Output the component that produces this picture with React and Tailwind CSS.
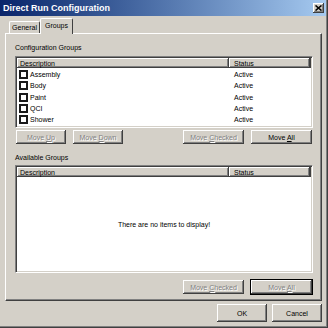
const raised = "bg-[#d4d0c8] shadow-[inset_-1px_-1px_#404040,inset_1px_1px_#ffffff,inset_-2px_-2px_#808080]";
const disabledText = "text-[#808080] [text-shadow:1px_1px_0_#ffffff]";

function Btn({ children, w, disabled, outline }) {
  return (
    <div
      className={`h-[14px] ${w} flex items-center justify-center ${raised} ${disabled ? disabledText : "text-black"} ${outline ? "outline outline-1 outline-black" : ""}`}
    >
      <span className="whitespace-nowrap">{children}</span>
    </div>
  );
}

function Header() {
  return (
    <div className="h-[10px] flex shrink-0">
      <div className={`w-[212px] h-full pl-[3px] flex items-center ${raised}`}>Description</div>
      <div className={`w-[81px] h-full pl-[5px] flex items-center ${raised}`}>Status</div>
      <div className={`flex-1 h-full ${raised}`}></div>
    </div>
  );
}

function ListBox({ h, children }) {
  return (
    <div
      className={`w-[298px] ${h} bg-white border-t border-l border-[#808080] border-r border-b border-r-white border-b-white shadow-[inset_1px_1px_#404040,inset_-1px_-1px_#d4d0c8] p-px flex flex-col`}
    >
      {children}
    </div>
  );
}

const rows = ["Assembly", "Body", "Paint", "QCI", "Shower"];

export default function App() {
  return (
    <div className="w-[328px] h-[328px] bg-[#d4d0c8] border-r border-b border-[#404040] font-['Liberation_Sans',Arial,sans-serif] text-[7px] leading-[9px] text-black overflow-hidden">
      <div className="h-full border-r border-b border-[#808080] flex flex-col">
        {/* Title bar */}
        <div className="h-[16px] shrink-0 bg-linear-to-r from-[#0a246a] to-[#a6caf0] flex items-center justify-between pl-[3px] pr-[2px]">
          <span className="text-white font-bold text-[9px] leading-[11px] whitespace-nowrap">Direct Run Configuration</span>
          <div className={`w-[11px] h-[10px] flex items-center justify-center ${raised}`}>
            <svg width="7" height="6" viewBox="0 0 7 6">
              <path d="M0.5 0.5 L6.5 5.5 M6.5 0.5 L0.5 5.5" stroke="#000" strokeWidth="1.6" />
            </svg>
          </div>
        </div>

        {/* Body */}
        <div className="flex-1 flex flex-col pl-[5px]">
          {/* Tabs */}
          <div className="h-[17px] shrink-0 flex items-end pl-[4px] relative z-10">
            <div className="w-[31px] h-[12px] border-t border-l border-white border-r border-r-[#404040] rounded-t-[2px] flex items-center justify-center pb-px">
              General
            </div>
            <div className="w-[33px] h-[16px] -mb-px bg-[#d4d0c8] border-t border-l border-white border-r border-r-[#404040] rounded-t-[2px] flex justify-center pt-[2px]">
              Groups
            </div>
          </div>

          {/* Panel */}
          <div className="w-[317px] h-[268px] shrink-0 border-t border-l border-white border-r border-b border-r-[#404040] border-b-[#404040] shadow-[inset_-1px_-1px_#808080] flex flex-col pl-[9px]">
            <div className="h-[9px] mt-[9px] whitespace-nowrap">Configuration Groups</div>
            <div className="mt-[4px]">
              <ListBox h="h-[72px]">
                <Header />
                <div className="pt-px flex flex-col">
                  {rows.map((r) => (
                    <div key={r} className="h-[11.25px] flex items-center">
                      <div className="w-[212px] flex items-center pl-[2px]">
                        <div className="w-[9px] h-[9px] border-2 border-[#1a1a1a] bg-white shrink-0"></div>
                        <span className="ml-[2px]">{r}</span>
                      </div>
                      <div className="pl-[5px]">Active</div>
                    </div>
                  ))}
                </div>
              </ListBox>
            </div>
            <div className="mt-[2px] w-[298px] flex">
              <div className="ml-px flex gap-[7px]">
                <Btn w="w-[50px]" disabled>Move <u>U</u>p</Btn>
                <Btn w="w-[50px]" disabled>Move <u>D</u>own</Btn>
              </div>
              <div className="ml-auto mr-px flex gap-[7px]">
                <Btn w="w-[61px]" disabled>Move <u>C</u>hecked</Btn>
                <Btn w="w-[61px]">Move <u>A</u>ll</Btn>
              </div>
            </div>

            <div className="h-[9px] mt-[9px] whitespace-nowrap">Available Groups</div>
            <div className="mt-[3px]">
              <ListBox h="h-[108px]">
                <Header />
                <div className="flex-1 flex items-center justify-center">There are no items to display!</div>
              </ListBox>
            </div>
            <div className="mt-[7px] w-[298px] flex">
              <div className="ml-auto mr-px flex gap-[7px]">
                <Btn w="w-[61px]" disabled>Move <u>C</u>hecked</Btn>
                <Btn w="w-[61px]" disabled outline>Move <u>A</u>ll</Btn>
              </div>
            </div>
          </div>

          {/* OK / Cancel */}
          <div className="w-[317px] mt-[3px] flex justify-end gap-[5px]">
            <div className={`w-[50px] h-[18px] flex items-center justify-center ${raised}`}>OK</div>
            <div className={`w-[50px] h-[18px] flex items-center justify-center ${raised}`}>Cancel</div>
          </div>
        </div>
      </div>
    </div>
  );
}
